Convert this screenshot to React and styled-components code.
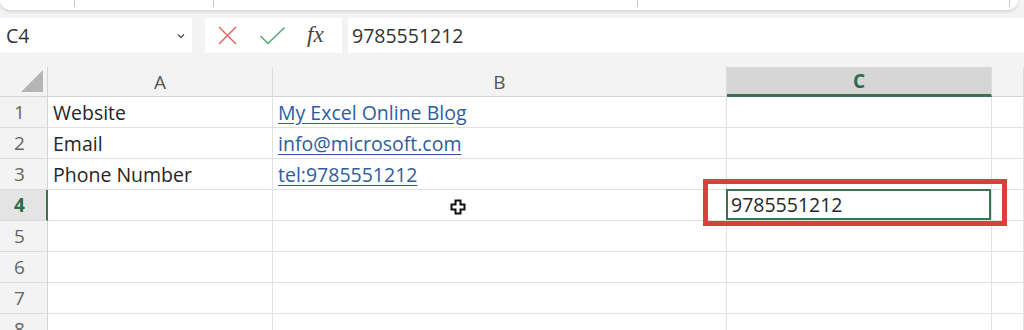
import React from "react";
import styled, { createGlobalStyle } from "styled-components";

const GlobalStyle = createGlobalStyle`
  html, body {
    margin: 0;
    padding: 0;
    background: #f3f3f3;
    font-family: "Open Sans", "Noto Sans", sans-serif;
    overflow: hidden;
  }
`;

const Page = styled.div`
  width: 1024px;
  height: 330px;
  overflow: hidden;
  display: flex;
  flex-direction: column;
  background: #f3f3f3;
  & > * {
    flex-shrink: 0;
  }
`;

const Ribbon = styled.div`
  height: 10px;
  margin-right: 6px;
  background: #fff;
  border-radius: 0 0 10px 10px;
  box-shadow: 0 2px 3px rgba(0, 0, 0, 0.12);
  display: flex;
  align-items: stretch;
`;

const RibbonSep = styled.span`
  width: 1px;
  height: 7px;
  background: #c8c8c8;
  margin-left: ${p => p.$at}px;
`;

const FormulaBar = styled.div`
  margin-top: 8px;
  height: 35px;
  display: flex;
  align-items: stretch;
`;

const NameBox = styled.div`
  width: 192px;
  background: #fff;
  display: flex;
  align-items: center;
  justify-content: space-between;
  padding: 0 6px 0 6px;
  box-sizing: border-box;
  font-size: 19.5px;
  color: #333;
`;

const Buttons = styled.div`
  margin-left: 13px;
  width: 137px;
  background: #fff;
  display: flex;
  align-items: center;
  padding-left: 12px;
  box-sizing: border-box;
  gap: 21px;
`;

const Fx = styled.span`
  font-family: "Liberation Serif", serif;
  font-style: italic;
  font-size: 23px;
  color: #444;
  margin-left: 0;
  margin-top: -2px;
`;

const FormulaInput = styled.div`
  margin-left: 6px;
  flex: 1;
  background: #fff;
  display: flex;
  align-items: center;
  padding-left: 4px;
  font-size: 19.5px;
  color: #333;
`;

const Sheet = styled.div`
  margin-top: 14px;
  display: grid;
  grid-template-columns: 48px 225px 454px 265px 1fr;
  grid-template-rows: 30px repeat(8, 31px);
`;

const Corner = styled.div`
  background: #f3f3f3;
  border-right: 1px solid #d4d4d4;
  border-bottom: 1px solid #d4d4d4;
  display: flex;
  align-items: flex-end;
  justify-content: flex-end;
  padding: 0 4px 4px 0;
  svg { display: block; }
`;

const ColHead = styled.div`
  background: ${p => (p.$active ? "#d6d6d6" : "#f3f3f3")};
  border-right: 1px solid #dcdcdc;
  border-bottom: ${p => (p.$active ? "3px solid #3f6f55" : "1px solid #d4d4d4")};
  display: flex;
  align-items: center;
  justify-content: center;
  font-size: 19px;
  color: ${p => (p.$active ? "#2f6a4a" : "#555")};
  font-weight: ${p => (p.$active ? 700 : 400)};
`;

const RowHead = styled.div`
  background: ${p => (p.$active ? "#e4e4e4" : "#f3f3f3")};
  border-right: ${p => (p.$active ? "2px solid #3f6f55" : "1px solid #d4d4d4")};
  border-bottom: 1px solid #dcdcdc;
  display: flex;
  align-items: center;
  justify-content: flex-start;
  padding-left: 14px;
  font-size: 19px;
  color: ${p => (p.$active ? "#2f6a4a" : "#666")};
  font-weight: ${p => (p.$active ? 700 : 400)};
`;

const Cell = styled.div`
  position: relative;
  background: #fff;
  border-right: 1px solid #e0e0e0;
  border-bottom: 1px solid #e0e0e0;
  display: flex;
  align-items: center;
  padding-left: 5px;
  font-size: 19.5px;
  color: #262626;
  white-space: nowrap;
`;

const Link = styled.a`
  color: #2e5c9e;
  text-decoration: underline;
  text-underline-offset: 3px;
`;

const Selected = styled.div`
  position: absolute;
  inset: -1px 0 0 -1px;
  border: 2px solid #3f6f55;
  display: flex;
  align-items: center;
  padding-left: 3px;
`;

const Highlight = styled.div`
  position: absolute;
  z-index: 5;
  left: -24px;
  right: -16px;
  top: -11px;
  bottom: -6px;
  border: 5px solid #d8403a;
  pointer-events: none;
`;

const Cursor = styled.svg`
  position: absolute;
  left: 177px;
  top: 9px;
`;

const rows = [
  ["Website", "My Excel Online Blog"],
  ["Email", "info@microsoft.com"],
  ["Phone Number", "tel:9785551212"],
];

export default function App() {
  return (
    <Page>
      <GlobalStyle />
      <Ribbon>
        <RibbonSep $at={74} />
        <RibbonSep $at={138} />
        <RibbonSep $at={423} />
        <RibbonSep $at={371} />
      </Ribbon>
      <FormulaBar>
        <NameBox>
          <span>C4</span>
          <svg width="10" height="6" viewBox="0 0 10 6">
            <path d="M2 1.5 L5 4.5 L8 1.5" fill="none" stroke="#555" strokeWidth="1.3" />
          </svg>
        </NameBox>
        <Buttons>
          <svg width="21" height="21" viewBox="0 0 21 21">
            <path d="M2 2 L19 19 M19 2 L2 19" stroke="#e06a66" strokeWidth="1.6" />
          </svg>
          <svg width="27" height="20" viewBox="0 0 27 20">
            <path d="M1.5 10 L9 17.5 L25.5 1.5" fill="none" stroke="#5aa574" strokeWidth="1.6" />
          </svg>
          <Fx>fx</Fx>
        </Buttons>
        <FormulaInput>9785551212</FormulaInput>
      </FormulaBar>
      <Sheet>
        <Corner>
          <svg width="22" height="22" viewBox="0 0 22 22">
            <path d="M22 0 L22 22 L0 22 Z" fill="#b5b5b5" />
          </svg>
        </Corner>
        <ColHead>A</ColHead>
        <ColHead>B</ColHead>
        <ColHead $active>C</ColHead>
        <ColHead />
        {rows.map(([a, b], i) => (
          <React.Fragment key={i}>
            <RowHead>{i + 1}</RowHead>
            <Cell>{a}</Cell>
            <Cell>
              <Link>{b}</Link>
            </Cell>
            <Cell />
            <Cell />
          </React.Fragment>
        ))}
        <RowHead $active>4</RowHead>
        <Cell />
        <Cell>
          <Cursor width="16" height="16" viewBox="0 0 16 16">
            <path
              d="M5.5 1.5 H10.5 V5.5 H14.5 V10.5 H10.5 V14.5 H5.5 V10.5 H1.5 V5.5 H5.5 Z"
              fill="#fff"
              stroke="#111"
              strokeWidth="2"
            />
          </Cursor>
        </Cell>
        <Cell>
          <Selected>9785551212</Selected>
          <Highlight />
        </Cell>
        <Cell />
        {[5, 6, 7, 8].map(n => (
          <React.Fragment key={n}>
            <RowHead>{n}</RowHead>
            <Cell />
            <Cell />
            <Cell />
            <Cell />
          </React.Fragment>
        ))}
      </Sheet>
    </Page>
  );
}
